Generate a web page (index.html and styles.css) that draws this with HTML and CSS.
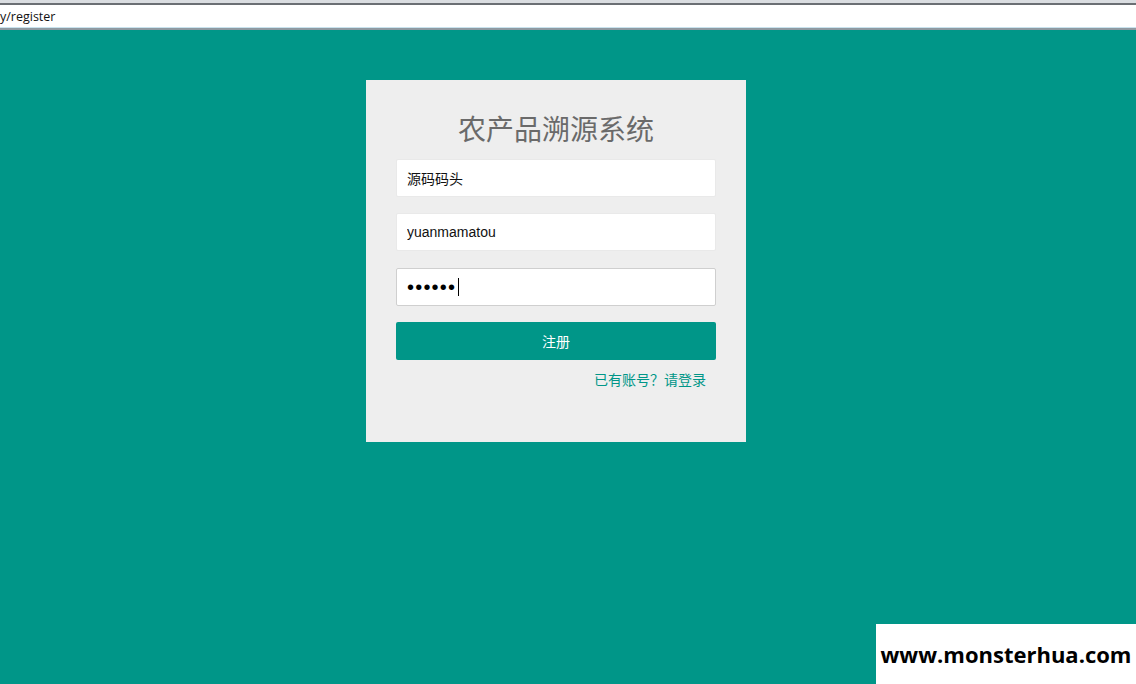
FILE: index.html
```html
<!DOCTYPE html>
<html lang="zh-CN">
<head>
<meta charset="utf-8">
<title>注册 - 农产品溯源系统</title>
<link rel="stylesheet" href="styles.css">
</head>
<body>
<div class="addr-bar">
  <div class="addr-field"><span class="addr-text">y/register</span></div>
</div>
<main class="stage">
  <section class="card">
    <h1 class="title">农产品溯源系统</h1>
    <form class="form">
      <div class="form-item"><input class="field" type="text" value="源码码头"></div>
      <div class="form-item form-item-wide"><input class="field" type="text" value="yuanmamatou"></div>
      <div class="form-item field-wrap">
        <input class="field field-focus" type="password" value="123456">
        <span class="caret"></span>
      </div>
      <div class="form-item"><button class="btn" type="button">注册</button></div>
      <div class="links"><a class="link" href="#">已有账号？请登录</a></div>
    </form>
  </section>
</main>
<div class="watermark">www.monsterhua.com</div>
</body>
</html>
```
FILE: styles.css
```css
html, body {
  margin: 0;
  padding: 0;
  height: 100%;
}
body {
  background: #009688;
  font-family: "Liberation Sans", "Noto Sans CJK SC", sans-serif;
  overflow: hidden;
  position: relative;
}
.addr-bar {
  background: #dadde1;
  padding-top: 3px;
}
.addr-field {
  background: #ffffff;
  border-top: 2px solid #6b6f74;
  border-bottom: 1px solid #c9e3ee;
  height: 22px;
  display: flex;
  align-items: center;
}
.addr-bar::after {
  content: "";
  display: block;
  height: 2px;
  background: #8f9aa2;
}
.addr-text {
  font-family: "Open Sans", "Noto Sans", sans-serif;
  font-size: 12.5px;
  color: #111;
}
.stage {
  display: flex;
  justify-content: center;
  padding-top: 50px;
  padding-right: 24px;
}
.card {
  width: 320px;
  background: #eeeeee;
  padding: 30px 30px 52px;
}
.title {
  margin: 0 0 13px;
  font-family: "Noto Sans CJK SC", sans-serif;
  font-weight: 400;
  font-size: 28px;
  line-height: 36px;
  color: #6a6a6a;
  text-align: center;
}
.form {
  margin: 0;
}
.form-item {
  margin-bottom: 16px;
}
.form-item-wide {
  margin-bottom: 17px;
}
.field-wrap {
  position: relative;
}
.field {
  display: block;
  box-sizing: border-box;
  width: 100%;
  height: 38px;
  margin: 0;
  padding: 0 10px;
  border: 1px solid #e9e9e9;
  border-radius: 2px;
  background: #fff;
  font-family: "Liberation Sans", "Noto Sans CJK SC", sans-serif;
  font-size: 14px;
  color: #111;
  outline: none;
}
.field-focus {
  border-color: #cfcfcf;
  font-size: 20px;
  letter-spacing: 1.2px;
  color: #000;
}
.caret {
  position: absolute;
  left: 62px;
  top: 10px;
  width: 1px;
  height: 18px;
  background: #000;
}
.btn {
  display: block;
  width: 100%;
  height: 38px;
  border: 0;
  border-radius: 2px;
  background: #009688;
  color: #fff;
  font-family: "Noto Sans CJK SC", sans-serif;
  font-size: 14px;
  cursor: pointer;
}
.links {
  margin-top: -7px;
  text-align: right;
  padding-right: 10px;
  line-height: 20px;
}
.link {
  font-family: "Noto Sans CJK SC", sans-serif;
  font-size: 14px;
  color: #009688;
  text-decoration: none;
}
.watermark {
  position: absolute;
  right: 0;
  bottom: 0;
  width: 260px;
  height: 60px;
  background: #fff;
  display: flex;
  align-items: center;
  justify-content: center;
  font-family: "Open Sans", "Noto Sans", sans-serif;
  font-weight: 700;
  font-size: 22px;
  color: #000;
}
```
